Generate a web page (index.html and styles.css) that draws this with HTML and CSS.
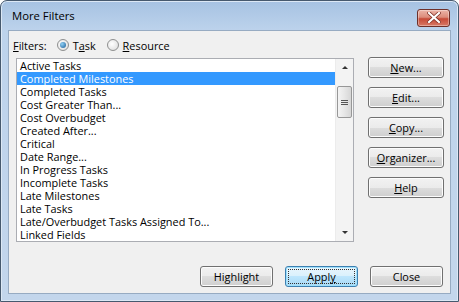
FILE: index.html
```html
<!DOCTYPE html>
<html lang="en">
<head>
    <meta charset="utf8"/>
    <title>More Filters</title>
    <link rel="stylesheet" href="styles.css">
</head>
<body>
<div class="window">
    <div class="titlebar">
        <span class="title">More Filters</span>
        <button class="close-btn" title="Close">
            <svg width="14" height="11" viewBox="0 0 14 11">
                <path d="M2 1 L12 10 M12 1 L2 10" stroke="#7a2a20" stroke-width="3.6" stroke-linecap="square"/>
                <path d="M2 1 L12 10 M12 1 L2 10" stroke="#fff" stroke-width="2.2" stroke-linecap="square"/>
            </svg>
        </button>
    </div>

    <div class="client">
        <div class="filters">
            <span class="label"><u>F</u>ilters:</span>
            <label class="radio"><span class="dot checked"></span>T<u>a</u>sk</label>
            <label class="radio"><span class="dot"></span><u>R</u>esource</label>
        </div>

        <div class="main">
            <div class="listbox">
                <ul class="items">
                    <li>Active Tasks</li>
                    <li class="selected">Completed Milestones</li>
                    <li>Completed Tasks</li>
                    <li>Cost Greater Than...</li>
                    <li>Cost Overbudget</li>
                    <li>Created After...</li>
                    <li>Critical</li>
                    <li>Date Range...</li>
                    <li>In Progress Tasks</li>
                    <li>Incomplete Tasks</li>
                    <li>Late Milestones</li>
                    <li>Late Tasks</li>
                    <li>Late/Overbudget Tasks Assigned To...</li>
                    <li>Linked Fields</li>
                </ul>
                <div class="scrollbar">
                    <div class="arrow up"></div>
                    <div class="track">
                        <div class="thumb"><span class="grip"></span></div>
                    </div>
                    <div class="arrow down"></div>
                </div>
            </div>

            <div class="side">
                <button class="btn"><u>N</u>ew...</button>
                <button class="btn"><u>E</u>dit...</button>
                <button class="btn"><u>C</u>opy...</button>
                <button class="btn"><u>O</u>rganizer...</button>
                <button class="btn"><u>H</u>elp</button>
            </div>
        </div>

        <div class="footer">
            <button class="btn">Hi<u>g</u>hlight</button>
            <button class="btn default"><span class="focus">Appl<u>y</u></span></button>
            <button class="btn">Close</button>
        </div>
    </div>
</div>
</body>
</html>
```

FILE: styles.css
```css
html, body {
    margin: 0;
    padding: 0;
    background: #ffffff;
}

body {
    font-family: "Open Sans", "Noto Sans", sans-serif;
    font-size: 10.9px;
    color: #000;
}

.window {
    width: 459px;
    height: 302px;
    box-sizing: border-box;
    border: 1px solid #46596e;
    border-radius: 7px 7px 0 0;
    background: linear-gradient(#a6c2e2, #bdd3ec 30px, #c3d6ec);
    padding: 0 7px 7px 7px;
    display: flex;
    flex-direction: column;
    box-shadow: inset 0 0 0 1px #dce8f5;
}

.titlebar {
    height: 29px;
    display: flex;
    align-items: center;
    justify-content: space-between;
}

.title {
    font-size: 11.3px;
    padding-left: 4px;
    color: #000;
}

.close-btn {
    width: 33px;
    height: 18px;
    margin-right: 1px;
    margin-top: 4px;
    border: 1px solid #6e3029;
    border-radius: 3px;
    background: linear-gradient(#ecb4a8, #dc8c7b 45%, #c74a38 55%, #d77a66);
    display: flex;
    align-items: center;
    justify-content: center;
    padding: 0;
    box-shadow: inset 0 0 0 1px rgba(255,255,255,0.35);
}

.client {
    flex: 1;
    background: #f0f0f0;
    border: 1px solid #97abc2;
    padding: 6px 6px 6px 7px;
    display: flex;
    flex-direction: column;
}

.filters {
    height: 16px;
    display: flex;
    align-items: center;
    margin-bottom: 5px;
    margin-left: -3px;
}

.filters .label {
    margin-right: 10px;
}

.radio {
    display: flex;
    align-items: center;
    margin-right: 11px;
}

.dot {
    width: 12px;
    height: 12px;
    box-sizing: border-box;
    border-radius: 50%;
    border: 1px solid #8e8f8f;
    background: radial-gradient(circle at 40% 40%, #ffffff, #d9d9d9);
    margin-right: 4px;
    position: relative;
}

.dot.checked::after {
    content: "";
    position: absolute;
    left: 2px;
    top: 2px;
    width: 6px;
    height: 6px;
    border-radius: 50%;
    background: radial-gradient(circle at 35% 35%, #8fd0f5, #1a5b96);
}

.main {
    display: flex;
}

.listbox {
    width: 339px;
    height: 184px;
    box-sizing: border-box;
    border: 1px solid #abadb3;
    background: #fff;
    display: flex;
}

.items {
    list-style: none;
    margin: 0;
    padding: 0;
    flex: 1;
}

.items li {
    height: 13px;
    line-height: 13px;
    padding-left: 3px;
    white-space: nowrap;
}

.items li.selected {
    background: #3399ff;
    color: #fff;
}

.scrollbar {
    width: 17px;
    display: flex;
    flex-direction: column;
    background: #f3f3f3;
    border-left: 1px solid #ececec;
}

.arrow {
    height: 17px;
    display: flex;
    align-items: center;
    justify-content: center;
}

.arrow::before {
    content: "";
    border-left: 3px solid transparent;
    border-right: 3px solid transparent;
}

.arrow.up::before {
    border-bottom: 3px solid #333;
}

.arrow.down::before {
    border-top: 3px solid #333;
}

.track {
    flex: 1;
    padding-top: 10px;
}

.thumb {
    height: 32px;
    margin: 0 1px;
    box-sizing: border-box;
    border: 1px solid #979797;
    border-radius: 2px;
    background: linear-gradient(90deg, #f4f4f4, #e6e6e6 50%, #d6d6d6);
    display: flex;
    align-items: center;
    justify-content: center;
}

.grip {
    width: 7px;
    height: 5px;
    background: repeating-linear-gradient(#555 0 1px, transparent 1px 2px);
}

.side {
    display: flex;
    flex-direction: column;
    gap: 9px;
    margin-left: 14px;
    margin-top: -1px;
}

.btn {
    width: 76px;
    height: 21px;
    box-sizing: border-box;
    border: 1px solid #707070;
    border-radius: 3px;
    background: linear-gradient(#f2f2f2, #ebebeb 50%, #dddddd 50%, #cfcfcf);
    box-shadow: inset 0 0 0 1px #fcfcfc;
    font-family: "Open Sans", "Noto Sans", sans-serif;
    font-size: 10.9px;
    padding: 0;
    color: #000;
}

.footer {
    display: flex;
    justify-content: flex-end;
    gap: 12px;
    margin-top: auto;
    padding-right: 1px;
}

.footer .btn {
    width: 73px;
}

.btn.default {
    border-color: #3c7fb1;
    background: linear-gradient(#eaf6fd, #d9f0fc 50%, #bee6fd 50%, #a7d9f5);
    box-shadow: inset 0 0 0 1px #9fe0fb;
}

.focus {
    display: block;
    margin: 2px;
    height: 13px;
    line-height: 13px;
    border: 1px dotted #333;
}
```
